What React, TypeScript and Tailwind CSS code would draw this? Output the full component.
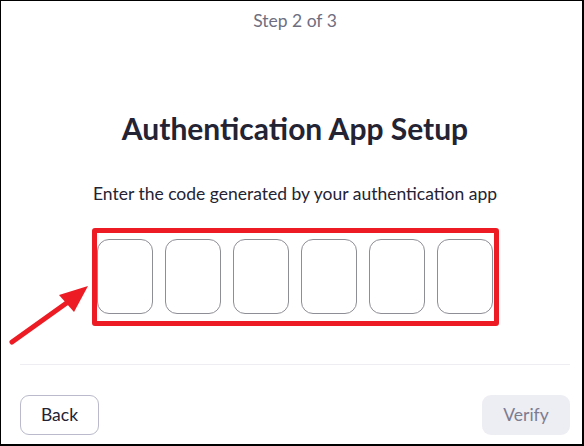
import React from "react";

export default function App() {
  const boxes = [0, 1, 2, 3, 4, 5];
  return (
    <div
      className="relative w-[584px] h-[446px] bg-white border-black border-t border-l border-r-2 border-b-2 flex flex-col pl-[19px] pr-[12px]"
      style={{ fontFamily: "Lato, 'Open Sans', sans-serif" }}
    >
      <div className="pt-[10px] text-center text-[17.5px] leading-[20px] text-[#6e6e80]">
        Step 2 of 3
      </div>
      <h1 className="mt-[79px] text-center text-[30px] leading-[36px] font-bold text-[#232333]">
        Authentication App Setup
      </h1>
      <p className="mt-[38px] text-center text-[17.5px] leading-[20px] text-[#232333]">
        Enter the code generated by your authentication app
      </p>
      <div className="mt-[24px] flex justify-center">
        <div className="w-[407px] border-[5px] border-[#ed1c24] rounded-[3px] pt-[6px] pb-[7px] flex justify-center gap-[12px]">
          {boxes.map((b) => (
            <div
              key={b}
              className="w-[56px] h-[75px] rounded-[12px] border border-[#8e8e96] bg-white"
            />
          ))}
        </div>
      </div>
      <div className="mt-[38px] h-px bg-[#ededf2]" />
      <div className="mt-[30px] flex justify-between items-center">
        <button className="w-[79px] h-[40px] rounded-[9px] border border-[#babacc] bg-white text-[17.5px] text-[#232333]">
          Back
        </button>
        <button className="w-[88px] h-[40px] rounded-[9px] bg-[#ededf4] text-[17.5px] text-[#7c7c90]">
          Verify
        </button>
      </div>
      <svg
        className="absolute left-[-1px] top-[-1px] pointer-events-none"
        width="584"
        height="446"
        viewBox="0 0 584 446"
      >
        <line
          x1="12"
          y1="342"
          x2="68"
          y2="302"
          stroke="#ed1c24"
          strokeWidth="5"
          strokeLinecap="round"
        />
        <polygon points="88,286 59,295 74,312" fill="#ed1c24" />
      </svg>
    </div>
  );
}
